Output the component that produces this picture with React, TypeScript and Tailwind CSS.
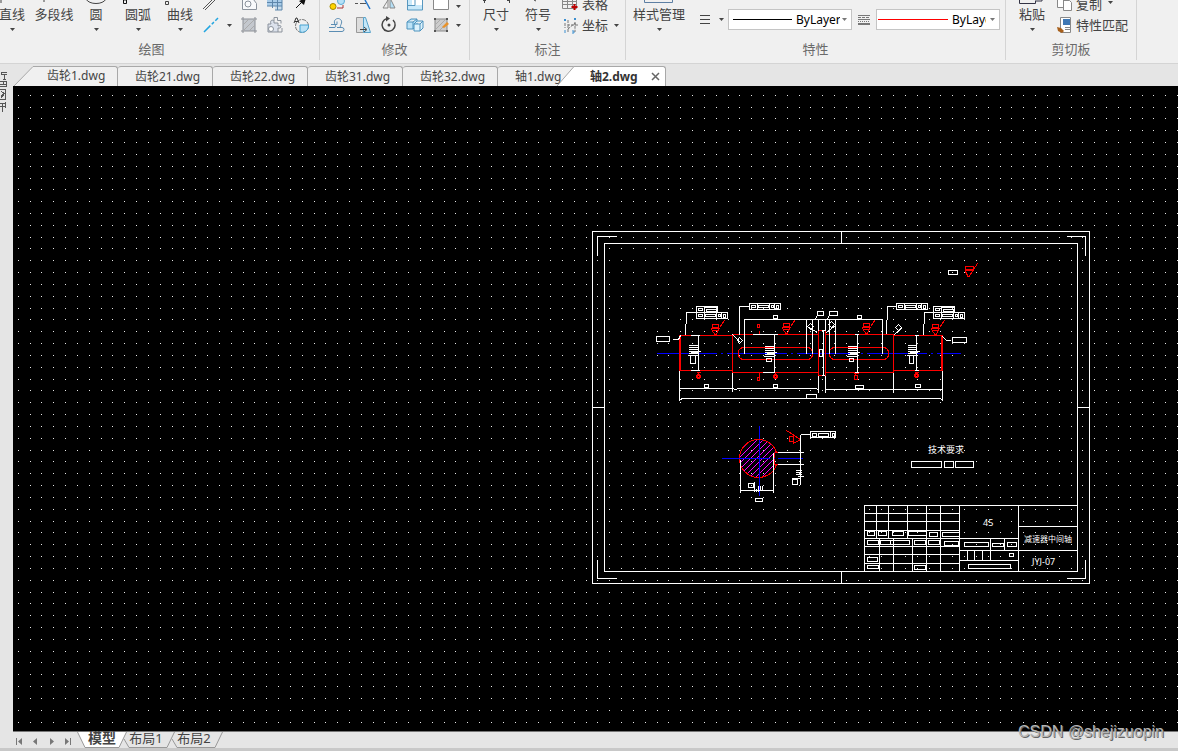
import type { ReactNode } from "react";

const GRID_STEP = 11.829;

const fileTabs = ["齿轮21.dwg", "齿轮22.dwg", "齿轮31.dwg", "齿轮32.dwg", "轴1.dwg"];

// [x, y, width, height] of the small frames inside the title block
const titleFrames = [
    [867, 531, 7, 4], [878, 531, 8, 4], [892, 531, 11, 4], [908, 531, 18, 4], [929, 532, 8, 4], [942, 532, 17, 4],
    [867, 540, 11, 4], [880, 540, 29, 4], [914, 540, 11, 4], [928, 540, 11, 4], [944, 541, 14, 4],
    [867, 557, 10, 4], [867, 565, 11, 3], [914, 565, 11, 4],
    [964, 542, 24, 4], [992, 543, 11, 3], [1007, 542, 9, 4], [1009, 553, 4, 3], [968, 564, 42, 4],
];

const labelFrames = [
    [656, 336, 13, 5], [952, 337, 14, 5], [773, 315, 4, 3], [857, 315, 4, 3], [817, 311, 6, 4], [829, 311, 8, 4],
    [704, 384, 4, 3], [773, 384, 4, 3], [806, 394, 10, 4], [855, 385, 8, 3], [915, 384, 5, 3],
    [690, 355, 5, 8], [766, 358, 5, 3], [849, 358, 4, 3], [909, 355, 4, 8], [819, 349, 3, 7],
    [748, 483, 5, 4], [755, 498, 7, 3], [792, 479, 5, 5], [948, 270, 9, 4],
    [911, 461, 30, 6], [944, 461, 9, 6], [955, 461, 18, 6],
];

function gridPath() {
    let d = "";
    for (let row = 0; row < 110; row++) {
        for (let col = 0; col < 180; col++) {
            const x = Math.floor(18.3 + col * GRID_STEP);
            const y = Math.floor(95.2 + row * GRID_STEP);
            d += `M${x} ${y}h1v1h-1z`;
        }
    }
    return d;
}

function Caret({ color = "#444" }: { color?: string }) {
    return (
        <svg width="5" height="3" viewBox="0 0 5 3" className="shrink-0" aria-hidden="true">
            <path d="M0 0h5L2.5 3z" fill={color} />
        </svg>
    );
}

function Group({ title, width, pad, children }: { title: string; width: string; pad: string; children: ReactNode }) {
    return (
        <section className={`flex h-[60px] shrink-0 flex-col border-r border-[#d4d4d4] ${width}`}>
            <div className={`flex h-[41px] items-start ${pad}`}>{children}</div>
            <h2 className="text-center leading-4 text-[#6a6a6a]">{title}</h2>
        </section>
    );
}

function BigButton({ label, icon, caret = true, className = "w-[42px]" }: { label: string; icon?: ReactNode; caret?: boolean; className?: string }) {
    return (
        <button className={`flex shrink-0 flex-col items-center whitespace-nowrap ${className}`}>
            <svg width="32" height="6" viewBox="0 0 32 6" fill="none" aria-hidden="true">{icon}</svg>
            <span className="mb-[6px] leading-4">{label}</span>
            {caret && <Caret />}
        </button>
    );
}

function TopIcon({ label, children }: { label: string; children: ReactNode }) {
    return (
        <button aria-label={label}>
            <svg width="18" height="12" viewBox="0 0 18 12" fill="none" aria-hidden="true">{children}</svg>
        </button>
    );
}

function Icon({ label, children }: { label: string; children: ReactNode }) {
    return (
        <button aria-label={label}>
            <svg width="18" height="18" viewBox="0 0 18 18" fill="none" aria-hidden="true">{children}</svg>
        </button>
    );
}

function Frame({ f }: { f: number[] }) {
    return <rect x={f[0]} y={f[1]} width={f[2]} height={f[3]} />;
}

function Tolerance({ x, y }: { x: number; y: number }) {
    return (
        <g>
            <rect x={x} y={y} width="31" height="6" />
            <rect x={x + 2} y={y + 2} width="4" height="2" />
            <path d={`M${x + 8} ${y}v6M${x + 20} ${y}v6M${x + 25} ${y}v6`} />
            <rect x={x + 9} y={y + 2} width="10" height="2" />
            <rect x={x + 22} y={y + 2} width="2" height="2" />
            <rect x={x + 27} y={y + 2} width="2" height="3" />
        </g>
    );
}

function TopTolerance({ x, y }: { x: number; y: number }) {
    return (
        <g>
            <rect x={x} y={y} width="21" height="6" />
            <rect x={x + 2} y={y + 2} width="4" height="2" />
            <path d={`M${x + 8} ${y}v6M${x + 8} ${y + 1}h13`} />
            <rect x={x + 10} y={y + 3} width="10" height="2" />
        </g>
    );
}

function Roughness({ x, y }: { x: number; y: number }) {
    return (
        <g>
            <rect x={x - 3} y={y - 11} width="6" height="3" />
            <path d={`M${x - 5} ${y - 7}h9M${x - 4} ${y - 6}l4 6M${x} ${y}l4 -7M${x + 4} ${y - 8}l5 -7M${x - 3} ${y - 5}h6`} />
        </g>
    );
}

function DimText({ x, y }: { x: number; y: number }) {
    return <path d={`M${x} ${y}h9M${x} ${y + 2}h9M${x} ${y + 4}h9M${x} ${y + 6}h12M${x + 2} ${y + 7}h8M${x} ${y + 8}h9M${x - 1} ${y + 10}h11`} />;
}

function Drawing() {
    return (
        <svg className="block h-full w-full" role="img" aria-label="轴2.dwg" shapeRendering="crispEdges">
            <g transform="translate(-13 -86)">
                <path d={gridPath()} fill="#e8e8e8" />
                <g transform="translate(.5 .5)" fill="none" strokeWidth="1">
                    {/* axis lines */}
                    <g stroke="#0000ff">
                        <path d="M656 353h304" strokeDasharray="60 4 2 4" />
                        <path d="M777 458h25M759 425v70" />
                    </g>

                    {/* shaft outline */}
                    <g stroke="#ff0000">
                        <path d="M679 335h53v35h-53zM680 335v35" />
                        <path d="M732 334h86v38h-86zM818 330h7v45h-7zM825 334h68v38h-68z" />
                        <path d="M893 335h49v35h-49zM941 335v35" />
                        <rect x="738" y="347" width="74" height="12" rx="5" />
                        <rect x="829" y="347" width="59" height="12" rx="5" />
                        <Roughness x={715} y={335} />
                        <Roughness x={786} y={334} />
                        <Roughness x={866} y={334} />
                        <Roughness x={935} y={335} />
                        <rect x="757" y="324" width="2" height="3" />
                        <rect x="757" y="377" width="2" height="3" />
                        <path d="M759 330v4M759 372v4" />
                        <path d="M696 372h4M698 372v2M773 372h4M775 372v2M853 373h5M855 373v2M914 372h4M916 371v2" />
                        <path d="M697 374h2v4h-2zM696 375h4v2h-4zM774 374h2v4h-2zM773 375h4v2h-4zM915 373h2v4h-2zM914 374h4v2h-4z" />
                        <rect x="854" y="375" width="3" height="4" />
                        <path d="M965 266h8v3h-8zM964 270h9M965 271l3 6M968 277l9 -14" />
                    </g>

                    {/* keyway section */}
                    <g>
                        <clipPath id="section">
                            <path d="M776 452A19 19 0 1 0 776 465h-3v-13z" />
                        </clipPath>
                        <g stroke="#ff00ff" clipPath="url(#section)">
                            {Array.from({ length: 16 }, (_, i) => (
                                <path key={i} d={`M${697 + i * 6} 481l46 -46`} />
                            ))}
                        </g>
                        <path d="M776 452A19 19 0 1 0 776 464M774 452h3M774 464h3M774 452v12" stroke="#ff0000" />
                        <path d="M721 458h48M772 458h2M759 440v38" stroke="#0000ff" />
                        <path d="M786 430l14 9l-7 4v-5M789 436h4v5h-4z" stroke="#ff0000" />
                        <path d="M777 452h26M777 464h26M800 434v50M800 434h10M740 459v33M773 452v40M740 490h33M754 481v10M756 488v3M758 485v6M760 485v5M762 485v5M795 470h6M795 472h6M795 474h6M797 476h6M791 478h9" stroke="#fff" />
                    </g>

                    <g stroke="#fff">
                        {/* sheet border */}
                        <rect x="592" y="231" width="497" height="352" />
                        <rect x="604" y="243" width="473" height="328" />
                        <path d="M597 255v-19h19M1066 236h19v19M1085 559v19h-19M616 578h-19v-19" />
                        <path d="M841 231v12M841 571v12M592 407h12M1077 407h12" />

                        {/* title block */}
                        <path d="M864 571v-66h213M959 505v66M1018 505v66" />
                        <path d="M876 505v33M888 505v33M907 505v33M926 505v66M940 505v66M879 538v33M893 538v33M912 538v33" />
                        <path d="M864 513h95M864 521h95M864 530h95M864 538h154M864 546h95M864 554h95M864 563h95" />
                        <path d="M959 550h118M959 560h59M990 538v22M1004 538v12M967 550v10M974 550v10M982 550v10M1018 526h59M890 540v4" />
                        {titleFrames.map((f, i) => <Frame key={i} f={f} />)}

                        {/* dimensions */}
                        <path d="M679 370v30M732 372v19M818 375v17M825 375v17M893 372v20M942 370v30" />
                        <path d="M679 388h53l3 1l3 -1h77l3 1M825 389h117M679 399l4 -1h256l3 1" />
                        <path d="M698 335v35M690 335h9M690 370h9M774 334v38M752 334h25M762 372h12M857 334v38M854 334h4M854 372h4M916 335v35M914 335h4M914 370h4" />
                        <path d="M744 318v35M806 318v35M812 318v35M829 318v35M835 318v35M882 318v35M744 319h138M818 318v12M825 318v12" />
                        <path d="M823 330v45M821 330h3M821 375h3M815 319l2 -5M827 319l2 -5" />
                        <path d="M732 334l9 9M808 327l9 5M835 325l-9 7M894 334l8 -7M672 339h6l2 -4M942 336l4 4h4" />
                        <path d="M739 337l3 3l-3 3l-2 -3zM810 323l3 3l-3 3l-3 -3zM831 321l3 3l-3 3l-3 -3zM898 324l3 3l-3 3l-3 -3z" />
                        <path d="M685 335l1 -23h10M739 334v-28h10M886 334l1 -28h9M923 335l1 -23h9" />
                        <TopTolerance x={696} y={306} />
                        <Tolerance x={696} y={312} />
                        <Tolerance x={749} y={303} />
                        <Tolerance x={896} y={303} />
                        <TopTolerance x={933} y={306} />
                        <Tolerance x={933} y={312} />
                        <path d="M810 431h25v6h-25zM812 433h4v3h-4zM818 433h10v3h-10zM830 431v6M832 433h2v3h-2z" />
                        <DimText x={688} y={345} />
                        <DimText x={764} y={346} />
                        <DimText x={847} y={346} />
                        <DimText x={907} y={345} />
                        {labelFrames.map((f, i) => <Frame key={i} f={f} />)}
                    </g>
                </g>

                <g fill="#fff" className="font-['Noto_Sans','Noto_Sans_CJK_SC',sans-serif]">
                    <text x="928" y="453" fontSize="9">技术要求</text>
                    <text x="983" y="526" fontSize="9">45</text>
                    <text x="1024" y="542" fontSize="8">减速器中间轴</text>
                    <text x="1032" y="565" fontSize="9">JYJ-07</text>
                </g>
            </g>
        </svg>
    );
}

function LayoutTab({ name }: { name: string }) {
    return (
        <button className="relative -ml-1 flex h-4 w-[52px] justify-center pr-[6px]">
            <svg width="52" height="16" viewBox="0 0 52 16" fill="none" className="absolute inset-0" aria-hidden="true">
                <path d="M1 7l5 8.5h38L51.500 0" stroke="#999" />
            </svg>
            <span className="relative leading-3">{name}</span>
        </button>
    );
}

export default function App() {
    return (
        <div className="flex h-screen flex-col overflow-hidden bg-[#e5e5e5] font-['Noto_Sans','Noto_Sans_CJK_SC',sans-serif] text-[13px] text-[#444]">
            {/* ribbon */}
            <header className="h-16 shrink-0 overflow-hidden border-b border-[#d4d4d4] bg-[#f0f0f0]">
                <div className="-ml-4 flex">
                    <Group title="绘图" width="w-[336px]" pad="pl-[7px]">
                        <BigButton label="直线" icon={<path d="M5 3v-3" stroke="#444" />} />
                        <BigButton label="多段线" caret={false} icon={<path d="M6 2v-2" stroke="#444" />} />
                        <BigButton label="圆" icon={<path d="M6 -1c3 6 17 6 20 0" stroke="#444" />} />
                        <BigButton label="圆弧" icon={<path d="M1.500 0v3.500h3v-3.500z" stroke="#111" />} />
                        <BigButton label="曲线" icon={<path d="M1.500 1.500h3v3h-3z" stroke="#444" />} />
                        <div className="grid grid-cols-[20px_16px_24px_27px_26px] grid-rows-[12px_16px] items-center justify-items-center gap-y-[5px]">
                            <TopIcon label="双线"><path d="M1 9l11 -11M3 10l11 -11" stroke="#555" /></TopIcon>
                            <span />
                            <TopIcon label="区域">
                                <path d="M2.500 0v9.500h14v-6l-3 -4" fill="#f8f9fb" stroke="#8b929c" />
                                <circle cx="8" cy="4" r="3" stroke="#8b929c" />
                            </TopIcon>
                            <TopIcon label="表">
                                <path d="M1 0h15v6h-15z" fill="#a8cbe8" />
                                <path d="M9 6h7v4h-7z" fill="#c9ddec" />
                                <path d="M1 2.500h15M1 6h15M6.500 0v8M11.500 0v10M9 10h7v-10" stroke="#5d86ab" />
                            </TopIcon>
                            <TopIcon label="射线">
                                <path d="M4 8l7 -7" stroke="#111" />
                                <path d="M7 1l5 4l2 -7z" fill="#111" />
                            </TopIcon>
                            <Icon label="构造线"><path d="M2 16L16 2" stroke="#22a5e0" strokeWidth="1.500" strokeDasharray="9 2 3 2" /></Icon>
                            <Caret />
                            <Icon label="填充">
                                <path d="M3 3h12v12h-12z" fill="#c4c8ce" />
                                <path d="M3 1v16M15 1v16M1 3h16M1 15h16" stroke="#8b8f96" />
                                <path d="M3 9l6 -6M3 15L15 3M9 15l6 -6" stroke="#aaa" />
                            </Icon>
                            <Icon label="块">
                                <path d="M2 8h3c-2 -5 4 -5 3 -1h4v3c4 -2 4 3 0 2v4h-10z" fill="#dbe1ec" stroke="#8b929c" />
                                <path d="M8 5V1.500h3.500v3h3.500v3M12 16h4v-4" stroke="#8b929c" />
                                <circle cx="5" cy="13" r="2.500" fill="#fff" stroke="#8b929c" />
                            </Icon>
                            <Icon label="面域">
                                <circle cx="10" cy="10" r="6.500" stroke="#777" strokeDasharray="4 1" />
                                <path d="M8 9h8.500v2a6.500 6.500 0 0 1 -8.500 5z" fill="#b9e1f6" stroke="#49a3d1" />
                                <path d="M2 7l2 -5h1l2 5M3 5.500h3" stroke="#333" />
                            </Icon>
                        </div>
                    </Group>

                    <Group title="修改" width="w-[150px]" pad="pl-1">
                        <div className="grid grid-cols-[26px_26px_26px_26px_26px_9px] grid-rows-[12px_16px] items-center justify-items-center gap-y-[5px]">
                            <TopIcon label="复制">
                                <path d="M9 8h6v-3" stroke="#a33" />
                                <circle cx="5" cy="6.500" r="3" fill="#ffd400" stroke="#a58a00" />
                                <circle cx="13" cy="1" r="3.500" fill="#b5e0f7" stroke="#5aaad5" />
                            </TopIcon>
                            <TopIcon label="修剪">
                                <path d="M11 0l5 9" stroke="#2476c9" strokeWidth="1.500" />
                                <path d="M1 3.500h3M6 3.500h6" stroke="#555" />
                            </TopIcon>
                            <TopIcon label="镜像">
                                <path d="M8 0v8H3l5 -8" stroke="#888" />
                                <path d="M10 0v8h5l-5 -10" fill="#b5e0f7" stroke="#888" />
                            </TopIcon>
                            <TopIcon label="缩放">
                                <path d="M1.500 -1v11h15v-11" fill="#c9e9fa" stroke="#5797bf" />
                                <path d="M6 -1h10v6h-10z" fill="#fff" />
                                <path d="M2 5.500h7v-6" stroke="#5797bf" />
                            </TopIcon>
                            <TopIcon label="拉伸"><path d="M1.500 -1v10.500h15v-10.500" fill="#fff" stroke="#888" /></TopIcon>
                            <Caret />
                            <Icon label="偏移">
                                <path d="M1 11.500h5c2 0 2 -1 1 -3c-2 -4 1 -6 3 -6s5 2 3 6c-1 2 -1 3 1 3a2 2 0 0 1 0 4h-13" stroke="#5b8db3" />
                                <path d="M3 8.500h6v-3M9 11.500h4" stroke="#5b8db3" />
                            </Icon>
                            <Icon label="拉长">
                                <path d="M2.500 1.500h7v15h-7z" fill="#ddd" stroke="#999" />
                                <path d="M9.500 1.500h2l5 15h-7z" fill="#c4e7f8" stroke="#58a2ca" />
                                <path d="M6 13.500h6M10 11l3 2.500l-3 2.500" stroke="#444" />
                            </Icon>
                            <Icon label="旋转">
                                <path d="M7 2.500A6.500 6.500 0 1 0 13 4" stroke="#444" strokeWidth="1.500" />
                                <path d="M6 0l4 2.500l-4 3z" fill="#444" />
                                <circle cx="9" cy="9" r="1.500" fill="#444" />
                            </Icon>
                            <Icon label="阵列">
                                <path d="M1 6l4 -3h6v7l-4 3h-6zM1 6h6l4 -3M7 6v7" fill="#bce3f7" stroke="#4d93be" />
                                <path d="M8 8l3 -3h6v7l-3 3h-6zM8 8h6l3 -3M14 8v7" fill="#ddf2fc" stroke="#4d93be" />
                            </Icon>
                            <Icon label="编辑">
                                <path d="M3 3h12v12h-12z" fill="#ccc" stroke="#888" />
                                <path d="M3 9l6 -6M3 14l11 -11M7 15l8 -8" stroke="#aaa" />
                                <path d="M2 2h2v2h-2zM14 2h2v2h-2zM2 14h2v2h-2zM14 14h2v2h-2z" fill="#555" />
                                <path d="M10 11l5 -5l2 2l-5 4z" fill="#e8922a" />
                            </Icon>
                            <Caret />
                        </div>
                    </Group>

                    <Group title="标注" width="w-[156px]" pad="pl-[5px]">
                        <BigButton label="尺寸" icon={<path d="M3 .5h3M4.500 0v3M27 .5h3M29.500 0v3" stroke="#444" />} />
                        <BigButton label="符号" icon={<path d="M12 0l2 1" stroke="#444" />} />
                        <div className="grid grid-rows-[12px_16px] gap-y-[5px] pl-[3px]">
                            <button className="flex items-end gap-[2px]">
                                <svg width="18" height="12" viewBox="0 0 18 12" fill="none" aria-hidden="true">
                                    <path d="M.5 0v8.500h14v-8.500M0 4.500h14M0 1.500h14M5.500 0v8M10.500 0v8" stroke="#888" />
                                    <path d="M12.500 4v6M9.500 7h6" stroke="#b00" strokeWidth="2" />
                                </svg>
                                <span className="leading-4">表格</span>
                            </button>
                            <button className="flex items-center gap-[2px]">
                                <svg width="18" height="18" viewBox="0 0 18 18" fill="none" aria-hidden="true">
                                    <path d="M2 3l2 2M4 3l-2 2M12 2l2 2M14 2l-2 2M3 14v3M10 15h2v2h-2" stroke="#3b8fd0" />
                                    <path d="M3 7v5M6 4v5h7v-3M6 9v7M6 13l7 -6v9M13 9h3" stroke="#777" strokeDasharray="3 1" />
                                </svg>
                                <span className="mr-1 leading-4">坐标</span>
                                <Caret />
                            </button>
                        </div>
                    </Group>

                    <Group title="特性" width="w-[380px]" pad="pl-[5px]">
                        <BigButton label="样式管理" className="w-14" icon={<path d="M1.500 0v2.500h28v-2.500" stroke="#5d7fa3" />} />
                        <div className="mt-[9px] flex h-[21px] items-center pl-3">
                            <button aria-label="线宽列表" className="flex items-center gap-2">
                                <svg width="12" height="9" viewBox="0 0 12 9" aria-hidden="true">
                                    <path d="M1 .5h10M1 4.500h10M1 8.500h10" stroke="#444" />
                                </svg>
                                <Caret />
                            </button>
                            <div className="ml-1 flex h-[21px] w-[124px] items-center border border-[#c4c4c4] bg-white pl-1">
                                <svg width="59" height="1" className="shrink-0" aria-hidden="true"><path d="M0 .5h59" stroke="#000" /></svg>
                                <select aria-label="线宽" className="mr-[2px] ml-1 w-[44px] appearance-none text-[12px] text-black">
                                    <option>ByLayer</option>
                                </select>
                                <Caret color="#777" />
                            </div>
                            <svg width="12" height="10" viewBox="0 0 12 10" className="mx-[6px] shrink-0" shapeRendering="crispEdges" aria-hidden="true">
                                <path d="M0 .5h12M0 4.500h12" stroke="#777" />
                                <path d="M0 2.500h12" stroke="#777" strokeDasharray="3 1" />
                                <path d="M0 6.500h12" stroke="#777" strokeDasharray="1 1" />
                                <path d="M0 9h12" stroke="#777" strokeWidth="2" />
                            </svg>
                            <div className="flex h-[21px] w-[124px] items-center border border-[#c4c4c4] bg-white pl-px">
                                <svg width="70" height="1" className="shrink-0" aria-hidden="true"><path d="M0 .5h70" stroke="#f00" /></svg>
                                <select aria-label="线型" className="mx-1 w-[34px] appearance-none overflow-hidden text-[12px] text-black">
                                    <option>ByLayer</option>
                                </select>
                                <Caret color="#777" />
                            </div>
                        </div>
                    </Group>

                    <Group title="剪切板" width="w-[131px]" pad="pl-[5px]">
                        <BigButton label="粘贴" icon={<path d="M3.500 0v3.500h16v-3M20 1h6v-1" stroke="#334" />} />
                        <div className="grid grid-rows-[12px_16px] gap-y-[5px] pl-[3px]">
                            <button className="flex items-end gap-[2px]">
                                <svg width="18" height="12" viewBox="0 0 18 12" fill="none" aria-hidden="true">
                                    <path d="M1.500 -1v8.500h6v-8.500M7.500 .5h6l2 2v8h-8z" fill="#fff" stroke="#888" />
                                </svg>
                                <span className="mr-1 leading-4">复制</span>
                                <span className="flex h-5 items-center"><Caret /></span>
                            </button>
                            <button className="flex items-center gap-[2px]">
                                <svg width="18" height="18" viewBox="0 0 18 18" fill="none" aria-hidden="true">
                                    <path d="M4.500 1.500h10v15h-10z" fill="#fff" stroke="#888" />
                                    <path d="M7 3h7v6h-7z" fill="#3f78b5" />
                                    <path d="M9 11.500h5M9 13.500h5" stroke="#888" />
                                    <path d="M1 11l4 1l3 3l-2 2l-4 -2z" fill="#a8601c" />
                                </svg>
                                <span className="leading-4">特性匹配</span>
                            </button>
                        </div>
                    </Group>
                </div>
            </header>

            <div className="flex min-h-0 flex-1">
                <aside className="w-[13px] shrink-0 pt-[7px]">
                    <svg width="7" height="42" viewBox="0 0 7 42" fill="none" stroke="#555" shapeRendering="crispEdges" aria-hidden="true">
                        <path d="M1.500 1v3M1 1.500h6v2h-6M4.500 4v4M3 8.500h3" />
                        <path d="M0 10.500h6.500v5h-6.500M0 13.500h6M3.500 10v3" />
                        <path d="M0 18.500h5.500v10h-5.500M1 20.500l3 2l-3 3M3 21v4l-2 2" />
                        <path d="M0 32.500h5M0 35.500h5M2.500 32v9M5.500 31v6" />
                    </svg>
                </aside>

                <main className="flex min-w-0 flex-1 flex-col">
                    {/* open files */}
                    <nav className="flex h-[22px] shrink-0 items-end text-[12px]">
                        <button className="flex h-5">
                            <svg width="21" height="20" viewBox="0 0 21 20" className="shrink-0" aria-hidden="true">
                                <path d="M1 20L20 .5h1V20z" fill="#f0f0f0" />
                                <path d="M1 20L20 .5h1" fill="none" stroke="#a8a8a8" />
                            </svg>
                            <span className="h-5 w-[84px] rounded-tr-[3px] border-t border-r border-[#a8a8a8] bg-[#f0f0f0] pl-[13px] text-left leading-[18px]">齿轮1.dwg</span>
                        </button>
                        {fileTabs.map((name) => (
                            <button key={name} className="h-5 w-[95px] rounded-t-[3px] border-t border-r border-[#a8a8a8] bg-[#f0f0f0] pl-[17px] text-left leading-[18px]">{name}</button>
                        ))}
                        <div className="relative -ml-9 flex h-5">
                            <svg width="18" height="20" viewBox="0 0 18 20" className="shrink-0" aria-hidden="true">
                                <path d="M0 20L17 .5h1V20z" fill="#fff" />
                                <path d="M0 20L17 .5h1" fill="none" stroke="#a8a8a8" />
                            </svg>
                            <div className="flex w-[91px] items-center justify-between rounded-tr-[3px] border-t border-r border-[#a8a8a8] bg-white pr-[5px] pl-[15px]">
                                <button className="font-bold leading-[18px] text-[#333]">轴2.dwg</button>
                                <button aria-label="关闭">
                                    <svg width="9" height="9" viewBox="0 0 9 9" aria-hidden="true"><path d="M1 1l7 7M8 1l-7 7" stroke="#666" strokeWidth="1.500" /></svg>
                                </button>
                            </div>
                        </div>
                    </nav>

                    <div className="min-h-0 flex-1 overflow-hidden bg-black">
                        <Drawing />
                    </div>

                    {/* layouts */}
                    <footer className="flex h-[17px] shrink-0 border-t border-[#777]">
                        <div className="flex w-16 items-center justify-between pt-[2px] pr-[6px] pl-[3px]">
                            <button aria-label="第一个"><svg width="7" height="7" viewBox="0 0 7 7" aria-hidden="true"><path d="M0 0h1v7H0zM6 0v7L2 3.500z" fill="#777" /></svg></button>
                            <button aria-label="上一个"><svg width="5" height="7" viewBox="0 0 5 7" aria-hidden="true"><path d="M4 0v7L0 3.500z" fill="#777" /></svg></button>
                            <button aria-label="下一个"><svg width="5" height="7" viewBox="0 0 5 7" aria-hidden="true"><path d="M1 0v7l4 -3.500z" fill="#777" /></svg></button>
                            <button aria-label="最后一个"><svg width="7" height="7" viewBox="0 0 7 7" aria-hidden="true"><path d="M1 0v7l4 -3.500zM6 0h1v7H6z" fill="#777" /></svg></button>
                        </div>
                        <button className="relative flex h-4 w-[50px] justify-center">
                            <svg width="50" height="16" viewBox="0 0 50 16" className="absolute inset-0" aria-hidden="true">
                                <path d="M.5 0L8 15.500h34L49.500 0" fill="#fff" stroke="#999" />
                            </svg>
                            <span className="relative text-[14px] leading-3 font-bold">模型</span>
                        </button>
                        <LayoutTab name="布局1" />
                        <LayoutTab name="布局2" />
                    </footer>
                </main>
            </div>
            <div className="h-[3px] shrink-0 bg-[#c8c8c8]" />

            <p className="absolute right-[14px] bottom-[9px] font-['Liberation_Sans',sans-serif] text-[16px] leading-[20px] text-[#b4b4b4] [text-shadow:1px_1px_0_#666]">CSDN @shejizuopin</p>
        </div>
    );
}
